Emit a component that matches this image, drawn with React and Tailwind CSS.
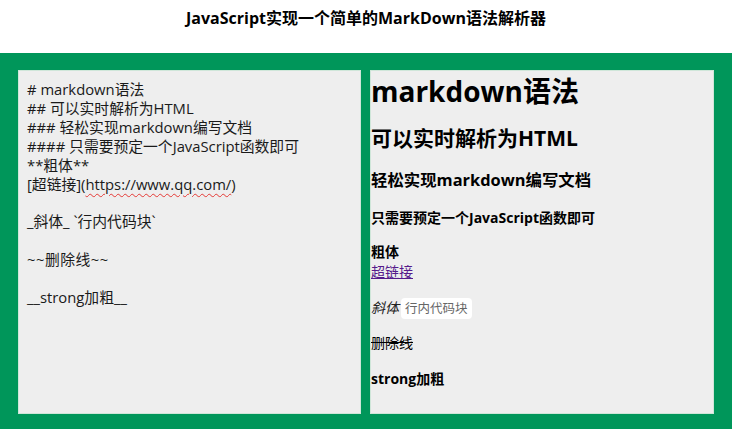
import React from "react";

const font = { fontFamily: '"Open Sans", "Noto Sans CJK SC", sans-serif' };

const source = [
  "# markdown语法",
  "## 可以实时解析为HTML",
  "### 轻松实现markdown编写文档",
  "#### 只需要预定一个JavaScript函数即可",
  "**粗体**",
];

export default function App() {
  return (
    <div className="w-[732px] h-[429px] overflow-hidden bg-white" style={font}>
      {/* Title */}
      <h3 className="h-[53px] pt-[6px] text-center text-[16px] leading-[24px] font-bold text-black">
        JavaScript实现一个简单的MarkDown语法解析器
      </h3>

      {/* Editor + preview */}
      <div className="bg-[#00965a] pt-[17px] pl-[18px] pr-[18px] pb-[17px] flex gap-[9px]">
        {/* Source */}
        <div className="w-[343px] h-[344px] shrink-0 bg-[#eeeeee] border border-[#cfe6d9] pt-[9px] pl-[8px] text-[14.8px] leading-[18.9px] text-[#1a1a1a]">
          {source.map((line) => (
            <div key={line}>{line}</div>
          ))}
          <div>
            [超链接](
            <span className="underline decoration-wavy decoration-[#e53935] decoration-1 underline-offset-[3px]">
              https://www.qq.com/
            </span>
            )
          </div>
          <div>&nbsp;</div>
          <div>_斜体_ `行内代码块`</div>
          <div>&nbsp;</div>
          <div className="tracking-[0.5px]">~~删除线~~</div>
          <div>&nbsp;</div>
          <div>__strong加粗__</div>
        </div>

        {/* Preview */}
        <div className="w-[344px] h-[344px] shrink-0 bg-[#eeeeee] border border-[#cfe6d9] pt-[2px] text-black">
          <h1 className="text-[28px] leading-[36px] font-bold">markdown语法</h1>
          <h2 className="mt-[15px] text-[21px] leading-[28px] font-bold">可以实时解析为HTML</h2>
          <h3 className="mt-[17px] text-[16.4px] leading-[22px] font-bold">轻松实现markdown编写文档</h3>
          <h4 className="mt-[17px] text-[14px] leading-[20px] font-bold">只需要预定一个JavaScript函数即可</h4>
          <p className="mt-[14px] text-[14px] leading-[20px]">
            <strong>粗体</strong>
            <br />
            <a href="#" className="text-[#551a8b] underline">超链接</a>
          </p>
          <p className="mt-[15px] text-[14px] leading-[22px] flex items-center">
            <em className="text-[#222]">斜体</em>
            <code
              className="ml-[2px] bg-white rounded-[4px] px-[4px] h-[21px] leading-[21px] text-[12.5px] text-[#666]"
              style={font}
            >
              行内代码块
            </code>
          </p>
          <p className="mt-[13px] text-[14px] leading-[22px]">
            <del className="decoration-black">删除线</del>
          </p>
          <p className="mt-[14px] text-[14px] leading-[22px]">
            <strong>strong加粗</strong>
          </p>
        </div>
      </div>
    </div>
  );
}
